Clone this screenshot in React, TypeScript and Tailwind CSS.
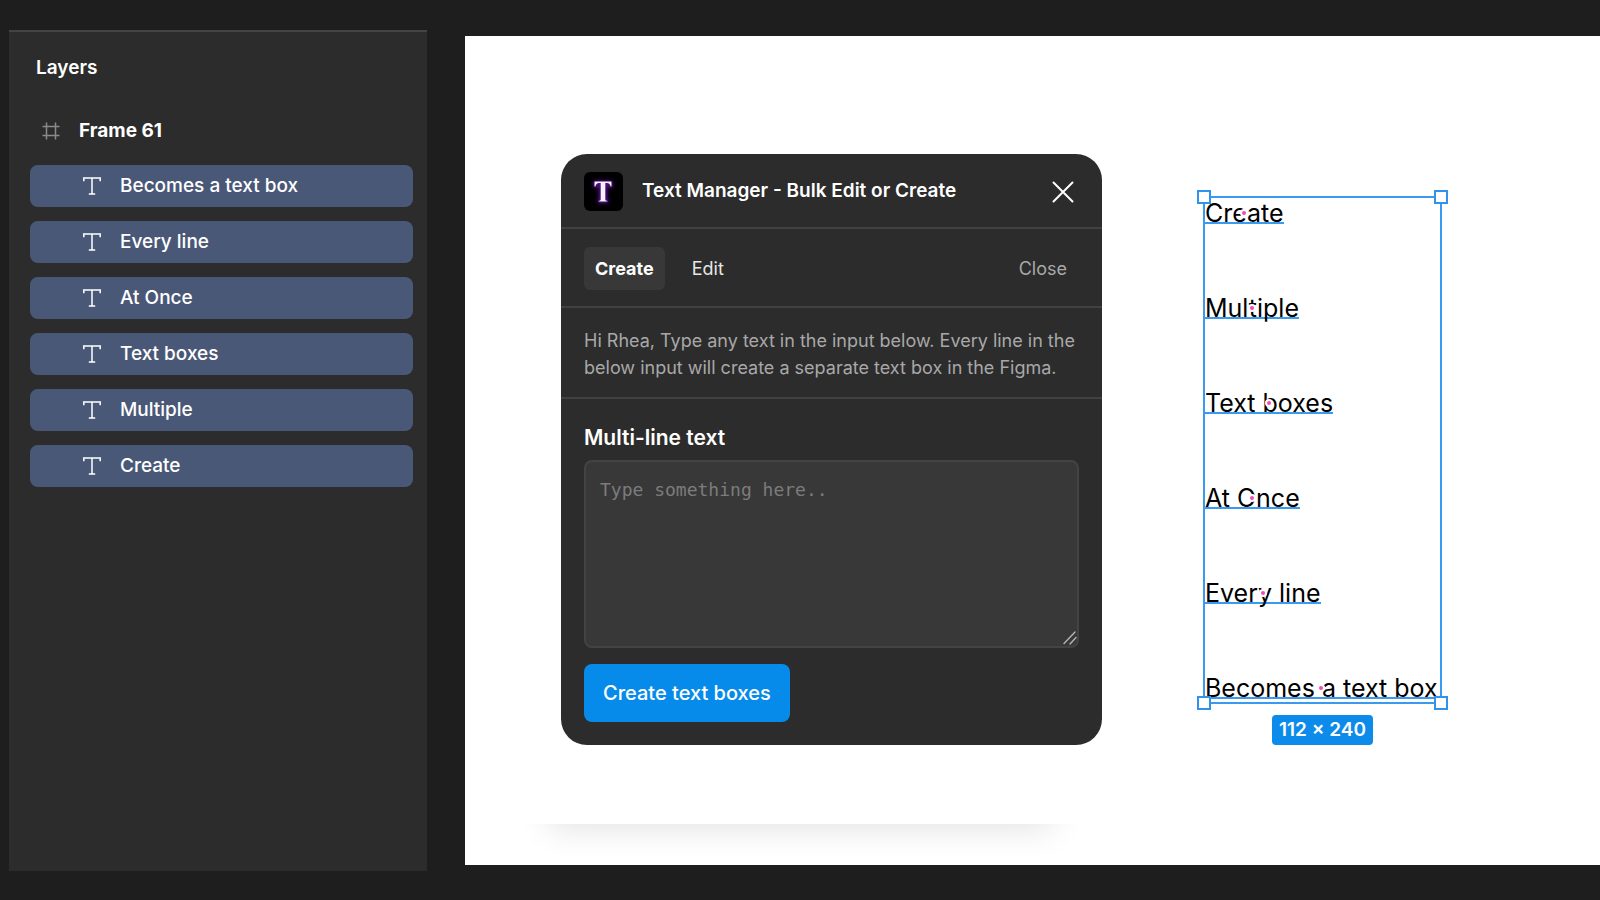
import React, { useState } from 'react';
import { clsx } from 'clsx';

const layers = ['Becomes a text box', 'Every line', 'At Once', 'Text boxes', 'Multiple', 'Create'];

const FrameIcon = () => (
  <svg width="18" height="18" viewBox="0 0 18 18" fill="none" stroke="#8a8a8a" strokeWidth="1.5" aria-hidden="true">
    <path d="M4.5 0.5v17M13.5 0.5v17M0.5 4.5h17M0.5 13.5h17" />
  </svg>
);

const TextIcon = () => (
  <svg width="18" height="18" viewBox="0 0 18 18" fill="none" stroke="#fff" strokeWidth="1.5" aria-hidden="true">
    <path d="M0.8 4.2V1h16.4v3.2M9 1v16M5.8 17h6.4" />
  </svg>
);

const LogoIcon = () => (
  <svg width="39" height="39" viewBox="0 0 39 39" aria-hidden="true">
    <defs>
      <filter id="glow" x="-50%" y="-50%" width="200%" height="200%">
        <feGaussianBlur stdDeviation="2" />
      </filter>
    </defs>
    <rect width="39" height="39" rx="6" fill="#000" />
    <path
      d="M10.5 10h17v5h-1.4c-.4-2.3-1.4-3.4-3.400-3.400h-1v15.600c0 1 .8 1.400 2.200 1.500v1h-9.800v-1c1.400-.1 2.200-.5 2.200-1.500V11.600h-1c-2 0-3 1.100-3.400 3.400h-1.400z"
      fill="#6f18b4"
      stroke="#6f18b4"
      strokeWidth="1.5"
      filter="url(#glow)"
    />
    <path
      d="M10.5 9.500h17v5h-.9c-.6-2.300-1.500-3.600-3.500-3.600h-1.800v16.300c0 1 .7 1.500 2.100 1.600v.8h-8.800v-.8c1.400-.1 2.100-.6 2.100-1.600V10.900h-1.800c-2 0-2.900 1.300-3.500 3.600h-.9z"
      fill="#f6f2fb"
    />
  </svg>
);

const LayersPanel = () => (
  <aside className="w-[418px] shrink-0 border-t-2 border-[#434343] bg-[#2c2c2c] pt-6 pr-[14px] pl-[21px]">
    <h2 className="pl-[6px] text-[19px] leading-6 font-semibold text-white">Layers</h2>
    <div className="mt-[39px] flex items-center gap-[19px] pl-3">
      <FrameIcon />
      <span className="text-[19px] leading-6 font-bold text-white">Frame 61</span>
    </div>
    <ul className="mt-[22px] flex flex-col gap-[14px]">
      {layers.map((name) => (
        <li key={name}>
          <button
            type="button"
            className="flex h-[42px] w-full items-center gap-[19px] rounded-lg bg-[#4a5878] pl-[53px] text-left text-[19px] font-medium text-white"
          >
            <TextIcon />
            {name}
          </button>
        </li>
      ))}
    </ul>
  </aside>
);

const PluginDialog = () => {
  const [tab, setTab] = useState('Create');
  const [text, setText] = useState('');

  return (
    <section className="w-full max-w-[541px] rounded-[26px] bg-[#2c2c2c] pb-[23px] text-white">
      <header className="flex h-[75px] items-center border-b-2 border-[#414141] pt-[2px] pr-7 pl-[23px]">
        <LogoIcon />
        <h1 className="ml-[19px] text-[19px] font-semibold">Text Manager - Bulk Edit or Create</h1>
        <button type="button" aria-label="Close dialog" className="ml-auto">
          <svg width="22" height="22" viewBox="0 0 22 22" stroke="#fff" strokeWidth="2" strokeLinecap="round">
            <path d="M1.5 1.5l19 19M20.5 1.5l-19 19" />
          </svg>
        </button>
      </header>

      <nav className="flex h-[79px] items-center border-b-2 border-[#414141] px-[23px] pt-[2px] text-lg">
        {['Create', 'Edit'].map((name) => (
          <button
            key={name}
            type="button"
            onClick={() => setTab(name)}
            className={clsx(
              'mr-4 h-[43px] rounded-md px-[11px]',
              tab === name ? 'bg-[#383838] font-bold text-white' : 'text-[#e6e6e6]',
            )}
          >
            {name}
          </button>
        ))}
        <button type="button" className="mr-3 ml-auto text-[#a8a8a8]">
          Close
        </button>
      </nav>

      <p className="border-b-2 border-[#414141] px-[23px] pt-[19px] pb-4 text-lg leading-[27px] text-[#a8a8a8]">
        Hi Rhea, Type any text in the input below. Every line in the below input will create a separate text box in the
        Figma.
      </p>

      <div className="px-[23px] pt-[25px]">
        <label htmlFor="multiline" className="block text-[21px] leading-7 font-semibold">
          Multi-line text
        </label>
        <div className="relative mt-2">
          <textarea
            id="multiline"
            value={text}
            onChange={(e) => setText(e.target.value)}
            placeholder="Type something here.."
            className="block h-[188px] w-full resize-none rounded-lg border-2 border-[#434343] bg-[#383838] px-[14px] py-4 font-['DejaVu_Sans_Mono',monospace] text-lg leading-6 placeholder:text-[#7c7c7c]"
          />
          <svg
            className="pointer-events-none absolute right-[2px] bottom-[3px]"
            width="14"
            height="14"
            viewBox="0 0 14 14"
            stroke="#b4b4b4"
            strokeWidth="1.4"
            strokeLinecap="round"
          >
            <path d="M1 12.5L12 1M7 13l6-6.5" />
          </svg>
        </div>
        <button type="button" className="mt-4 h-[58px] rounded-lg bg-[#078bea] px-[19px] text-[20px] font-medium">
          Create text boxes
        </button>
      </div>
    </section>
  );
};

const Handle = ({ className }: { className: string }) => (
  <span className={clsx('absolute h-[14px] w-[14px] border-2 border-[#2f93ee] bg-white', className)} />
);

const Selection = () => (
  <div className="flex shrink-0 flex-col items-center gap-[11px]">
    <div className="relative w-[239px] border-2 border-[#3a9af0] pt-[2px] pb-[3px]">
      <ul className="flex flex-col items-start gap-[71px]">
        {[...layers].reverse().map((name) => (
          <li
            key={name}
            className="relative h-6 border-b-2 border-[#3a9af0] text-[25px] leading-[26px] whitespace-nowrap text-black"
          >
            {name}
            <span className="absolute top-[9px] left-1/2 h-2 w-2 -translate-x-1/2 rounded-full border-2 border-white bg-[#f24bb8]" />
          </li>
        ))}
      </ul>
      <Handle className="-top-2 -left-2" />
      <Handle className="-top-2 -right-2" />
      <Handle className="-bottom-2 -left-2" />
      <Handle className="-right-2 -bottom-2" />
    </div>
    <span className="h-[30px] rounded bg-[#0d8bea] px-[7px] text-[19px] leading-[30px] font-semibold text-white">
      112 × 240
    </span>
  </div>
);

export default function App() {
  return (
    <div className="flex min-h-screen bg-[#1e1e1e] pt-[30px] pb-[29px] pl-[9px] font-['Inter',sans-serif]">
      <LayersPanel />
      <main className="relative mt-[6px] mb-[6px] ml-[38px] flex flex-1 items-start bg-white pt-[118px] pl-24">
        <PluginDialog />
        <div className="mt-[42px] ml-[101px]">
          <Selection />
        </div>
        {/* soft shadow under the dialog area */}
        <div className="absolute bottom-[9px] left-[45px] h-8 w-[580px] overflow-hidden">
          <div className="mx-auto -mt-10 h-10 w-[505px] rounded-lg shadow-[0_4px_34px_rgba(0,0,0,0.12)]" />
        </div>
      </main>
    </div>
  );
}
